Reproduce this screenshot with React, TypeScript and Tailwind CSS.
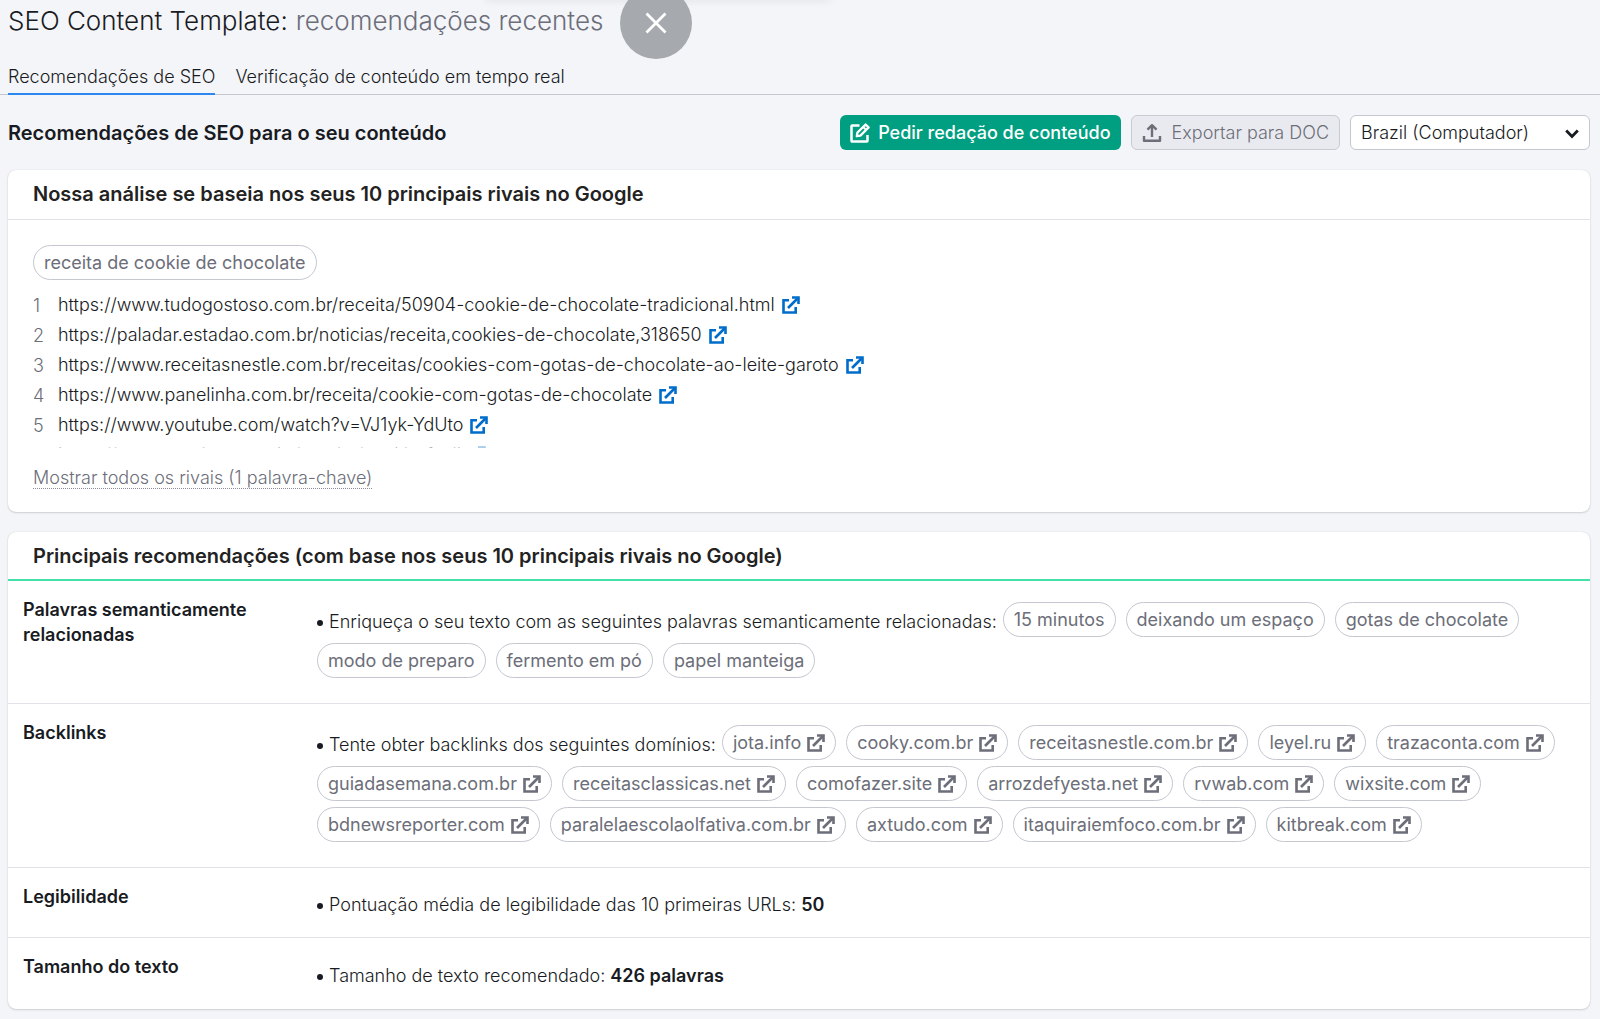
import React, { useState } from "react";

const rivals = [
  "https://www.tudogostoso.com.br/receita/50904-cookie-de-chocolate-tradicional.html",
  "https://paladar.estadao.com.br/noticias/receita,cookies-de-chocolate,318650",
  "https://www.receitasnestle.com.br/receitas/cookies-com-gotas-de-chocolate-ao-leite-garoto",
  "https://www.panelinha.com.br/receita/cookie-com-gotas-de-chocolate",
  "https://www.youtube.com/watch?v=VJ1yk-YdUto",
  "https://www.receitas.com.br/receita/cookie-facil",
];

const words = [
  "15 minutos",
  "deixando um espaço",
  "gotas de chocolate",
  "modo de preparo",
  "fermento em pó",
  "papel manteiga",
];

const domains = [
  "jota.info",
  "cooky.com.br",
  "receitasnestle.com.br",
  "leyel.ru",
  "trazaconta.com",
  "guiadasemana.com.br",
  "receitasclassicas.net",
  "comofazer.site",
  "arrozdefyesta.net",
  "rvwab.com",
  "wixsite.com",
  "bdnewsreporter.com",
  "paralelaescolaolfativa.com.br",
  "axtudo.com",
  "itaquiraiemfoco.com.br",
  "kitbreak.com",
];

const tabs = ["Recomendações de SEO", "Verificação de conteúdo em tempo real"];

function ExternalIcon() {
  return (
    <svg viewBox="0 0 18 18" className="size-[18px] shrink-0" fill="none" stroke="currentColor" strokeWidth="2.6" aria-hidden="true">
      <path d="M7 4.300H1.500v12.200h12.200V11" />
      <path d="M6 12 16 2" />
      <path d="M10 1.500h6.500V8" />
    </svg>
  );
}

function EditIcon() {
  return (
    <svg viewBox="0 0 20 20" className="size-5" fill="none" stroke="currentColor" strokeWidth="2.5" aria-hidden="true">
      <path d="M9.500 2.500H2.200a.7.7 0 0 0-.7.7v14.600a.7.7 0 0 0 .7.7h14.600a.7.7 0 0 0 .7-.7V12" />
      <path d="M6.800 13.200 7.400 9.600 15.600 1.500 18.600 4.400 10.400 12.600Z" strokeLinejoin="round" strokeWidth="2.300" />
      <path d="m13.200 4 2.900 2.900" strokeWidth="2" />
    </svg>
  );
}

function UploadIcon() {
  return (
    <svg viewBox="0 0 20 20" className="size-5" fill="none" stroke="currentColor" strokeWidth="2.4" strokeLinejoin="round" aria-hidden="true">
      <path d="M10 14V2.500" />
      <path d="M5.500 6.700 10 2.200l4.500 4.500" />
      <path d="M2 13v4.800h16V13" />
    </svg>
  );
}

function Chip({ children }: { children: React.ReactNode }) {
  return (
    <span className="inline-flex h-[35px] items-center rounded-full border border-[#c4c7cf] px-2.5 font-normal text-[#6c6e79]">
      {children}
    </span>
  );
}

function Bullet({ children }: { children: React.ReactNode }) {
  return (
    <p className="-mr-1 flex items-center gap-1.5 pt-1">
      <span className="mt-0.5 size-1.5 rounded-full bg-[#191b23]" />
      <span>{children}</span>
    </p>
  );
}

export default function App() {
  const [tab, setTab] = useState(0);
  const [open, setOpen] = useState(false);

  return (
    <div className="relative min-h-screen overflow-hidden bg-[#f4f5f9] pb-2 font-['Inter','Liberation_Sans',sans-serif] text-lg leading-[25px] font-light text-[#191b23]">
      <header className="px-2 pt-1.5">
        <h1 className="flex gap-2 text-[26px] leading-[30px] font-light">
          <span>SEO Content Template:</span>
          <span className="text-[#6c6e79]">recomendações recentes</span>
        </h1>
      </header>
      <div className="absolute -top-1 left-[485px] h-1 w-[345px] shadow-[0_0_8px_rgba(0,0,0,0.12)]" />
      <button
        aria-label="Fechar"
        className="absolute -top-[13px] left-[620px] flex size-[72px] items-center justify-center rounded-full bg-[#a6a9ad] text-white"
      >
        <svg viewBox="0 0 22 22" className="size-[22px]" fill="none" stroke="currentColor" strokeWidth="2.8" aria-hidden="true">
          <path d="M1.500 1.500 20.500 20.500M20.500 1.500 1.500 20.500" />
        </svg>
      </button>

      <nav className="mt-6 flex gap-5 border-b border-[#c4c7cf] px-2">
        {tabs.map((label, i) => (
          <button
            key={label}
            onClick={() => setTab(i)}
            className={`-mb-px h-[35px] border-b-2 ${tab === i ? "border-[#2b88f0]" : "border-transparent"}`}
          >
            {label}
          </button>
        ))}
      </nav>

      <main className="flex flex-col gap-5 pt-5 pr-2.5 pl-2">
        <div className="flex items-center gap-2.5">
          <h2 className="mr-auto text-xl leading-6 font-semibold">Recomendações de SEO para o seu conteúdo</h2>
          <button className="flex h-[35px] items-center gap-2 rounded-md bg-[#009f81] px-2.5 font-medium text-white">
            <EditIcon />
            Pedir redação de conteúdo
          </button>
          <button className="flex h-[35px] items-center gap-2.5 rounded-md border border-[#c9cbd3] bg-[#e9eaef] px-2.5 text-[#6c6e79]">
            <UploadIcon />
            Exportar para DOC
          </button>
          <div className="relative">
            <select
              aria-label="Local e dispositivo"
              className="h-[35px] w-60 appearance-none rounded-md border border-[#c4c7cf] bg-white px-2.5"
            >
              <option>Brazil (Computador)</option>
            </select>
            <svg viewBox="0 0 14 10" className="pointer-events-none absolute top-[14px] right-[11px] h-2.5 w-3.5" fill="none" stroke="currentColor" strokeWidth="2.8" aria-hidden="true">
              <path d="m1.200 1.500 5.800 6 5.800-6" />
            </svg>
          </div>
        </div>

        <section className="rounded-lg bg-white shadow-[0_0_1px_rgba(25,27,35,0.2),0_1px_2px_rgba(25,27,35,0.15)]">
          <h3 className="border-b border-[#e0e1e9] px-[25px] py-3 text-xl leading-[25px] font-semibold text-[#222]">
            Nossa análise se baseia nos seus 10 principais rivais no Google
          </h3>
          <div className="px-[25px] pt-[25px] pb-[23px]">
            <Chip>receita de cookie de chocolate</Chip>
            <div className={open ? "pt-2.5" : "relative h-[168px] overflow-hidden pt-2.5"}>
              <ol className="leading-[30px]">
                {rivals.map((url, i) => (
                  <li key={url} className="flex h-[30px] items-center">
                    <span className="w-[25px] pt-0.5 text-[#6c6e79]">{i + 1}</span>
                    <span>{url}</span>
                    <a href={url} aria-label={`Abrir ${url}`} className="ml-[7px] text-[#006dca]">
                      <ExternalIcon />
                    </a>
                  </li>
                ))}
              </ol>
              {!open && (
                <div className="absolute inset-x-0 bottom-0 h-2.5 bg-linear-to-b from-white/0 to-white/70" />
              )}
            </div>
            <button
              onClick={() => setOpen(!open)}
              className="mt-5 block border-b border-dotted border-[#8a8e9b] leading-5 text-[#6c6e79]"
            >
              Mostrar todos os rivais (1 palavra-chave)
            </button>
          </div>
        </section>

        <section className="rounded-lg bg-white shadow-[0_0_1px_rgba(25,27,35,0.2),0_1px_2px_rgba(25,27,35,0.15)]">
          <h3 className="border-b-2 border-[#45e0a8] px-[25px] pt-3 pb-2.5 text-xl leading-[25px] font-semibold text-[#222]">
            Principais recomendações (com base nos seus 10 principais rivais no Google)
          </h3>
          <table className="w-full text-left">
            <tbody className="divide-y divide-[#e0e1e9]">
              <tr>
                <th scope="row" className="w-[294px] px-[15px] pt-4 align-top font-semibold">
                  Palavras semanticamente relacionadas
                </th>
                <td className="pt-[21px] pr-5 pb-[25px] pl-[15px]">
                  <div className="flex flex-wrap items-center gap-x-2.5 gap-y-1.5">
                    <Bullet>Enriqueça o seu texto com as seguintes palavras semanticamente relacionadas:</Bullet>
                    {words.map((word) => (
                      <Chip key={word}>{word}</Chip>
                    ))}
                  </div>
                </td>
              </tr>
              <tr>
                <th scope="row" className="px-[15px] pt-4 align-top font-semibold">Backlinks</th>
                <td className="pt-[21px] pr-5 pb-[25px] pl-[15px]">
                  <div className="flex flex-wrap items-center gap-x-2.5 gap-y-1.5">
                    <Bullet>Tente obter backlinks dos seguintes domínios:</Bullet>
                    {domains.map((domain) => (
                      <Chip key={domain}>
                        <a href={`https://${domain}`} className="flex items-center gap-1.5">
                          {domain}
                          <ExternalIcon />
                        </a>
                      </Chip>
                    ))}
                  </div>
                </td>
              </tr>
              <tr>
                <th scope="row" className="px-[15px] pt-4 align-top font-semibold">Legibilidade</th>
                <td className="py-5 pl-[15px]">
                  <Bullet>
                    Pontuação média de legibilidade das 10 primeiras URLs: <b className="font-semibold">50</b>
                  </Bullet>
                </td>
              </tr>
              <tr>
                <th scope="row" className="px-[15px] pt-4 align-top font-semibold">Tamanho do texto</th>
                <td className="py-[21px] pl-[15px]">
                  <Bullet>
                    Tamanho de texto recomendado: <b className="font-semibold">426 palavras</b>
                  </Bullet>
                </td>
              </tr>
            </tbody>
          </table>
        </section>
      </main>
    </div>
  );
}
